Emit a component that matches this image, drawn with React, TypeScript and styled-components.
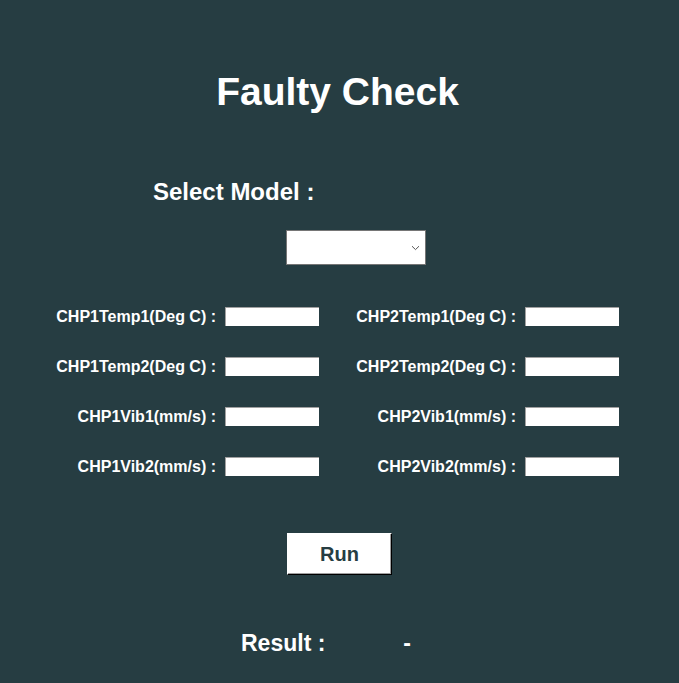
import React, { useState } from "react";
import styled, { createGlobalStyle } from "styled-components";

const GlobalStyle = createGlobalStyle`
  html, body {
    margin: 0;
    padding: 0;
    background-color: #263d42;
  }
  body {
    font-family: "Liberation Sans", Arial, sans-serif;
  }
`;

const Page = styled.div`
  min-height: 683px;
  display: flex;
  flex-direction: column;
  align-items: center;
  padding-top: 70px;
  box-sizing: border-box;
  color: #ffffff;
`;

const Title = styled.h1`
  margin: 0 4px 0 0;
  font-size: 39px;
  font-weight: bold;
  line-height: normal;
`;

const ModelLabel = styled.div`
  align-self: flex-start;
  margin: 64px 0 0 153px;
  font-size: 24px;
  font-weight: bold;
  line-height: normal;
`;

const SelectWrap = styled.div`
  position: relative;
  margin: 24px 0 0 33px;
  width: 140px;
  height: 35px;
`;

const ModelSelect = styled.select`
  appearance: none;
  display: block;
  width: 100%;
  height: 100%;
  background: #ffffff;
  border: 1px solid #767676;
  border-radius: 0;
  font-family: "Liberation Sans", Arial, sans-serif;
  font-size: 14px;
  outline: none;
`;

const Chevron = styled.svg`
  position: absolute;
  right: 6px;
  top: 15px;
  pointer-events: none;
`;

const FieldGrid = styled.div`
  align-self: flex-start;
  margin: 42px 0 0 54px;
  display: grid;
  grid-template-columns: 162px 94px 188px 94px;
  column-gap: 9px;
  row-gap: 31px;
  align-items: center;
`;

const FieldLabel = styled.label`
  justify-self: end;
  font-size: 16px;
  font-weight: bold;
  line-height: normal;
  white-space: nowrap;
`;

const FieldInput = styled.input`
  width: 94px;
  height: 19px;
  box-sizing: border-box;
  padding: 0 3px;
  border: none;
  border-top: 1px solid #a0a0a0;
  border-left: 1px solid #a0a0a0;
  background: #ffffff;
  outline: none;
  font-size: 13px;
`;

const RunButton = styled.button`
  margin: 57px 0 0 0;
  width: 105px;
  height: 42px;
  background: #ffffff;
  border: 1px solid;
  border-color: #ffffff #000000 #000000 #ffffff;
  box-shadow: inset -1px -1px 0 #a0a0a0;
  color: #263d42;
  font-family: "Liberation Sans", Arial, sans-serif;
  font-size: 20px;
  font-weight: bold;
  cursor: pointer;
`;

const ResultRow = styled.div`
  align-self: flex-start;
  display: flex;
  align-items: baseline;
  margin: 55px 0 0 241px;
  font-size: 23px;
  font-weight: bold;
  line-height: normal;
`;

const ResultValue = styled.span`
  margin-left: 78px;
`;

const fields = [
  ["CHP1Temp1(Deg C) :", "CHP2Temp1(Deg C) :"],
  ["CHP1Temp2(Deg C) :", "CHP2Temp2(Deg C) :"],
  ["CHP1Vib1(mm/s) :", "CHP2Vib1(mm/s) :"],
  ["CHP1Vib2(mm/s) :", "CHP2Vib2(mm/s) :"],
];

const App: React.FC = () => {
  const [values, setValues] = useState<Record<string, string>>({});
  const [result] = useState("-");

  const setValue = (key: string, v: string) =>
    setValues((prev) => ({ ...prev, [key]: v }));

  return (
    <>
      <GlobalStyle />
      <Page>
        <Title>Faulty Check</Title>
        <ModelLabel>Select Model :</ModelLabel>
        <SelectWrap>
          <ModelSelect defaultValue="">
            <option value=""></option>
          </ModelSelect>
          <Chevron width="9" height="6" viewBox="0 0 9 6">
            <path d="M1 1.2 L4.5 4.6 L8 1.2" fill="none" stroke="#555" strokeWidth="1" />
          </Chevron>
        </SelectWrap>
        <FieldGrid>
          {fields.map((row) =>
            row.map((name) => (
              <React.Fragment key={name}>
                <FieldLabel>{name}</FieldLabel>
                <FieldInput
                  value={values[name] || ""}
                  onChange={(e) => setValue(name, e.target.value)}
                />
              </React.Fragment>
            ))
          )}
        </FieldGrid>
        <RunButton>Run</RunButton>
        <ResultRow>
          <span>Result :</span>
          <ResultValue>{result}</ResultValue>
        </ResultRow>
      </Page>
    </>
  );
};

export default App;
